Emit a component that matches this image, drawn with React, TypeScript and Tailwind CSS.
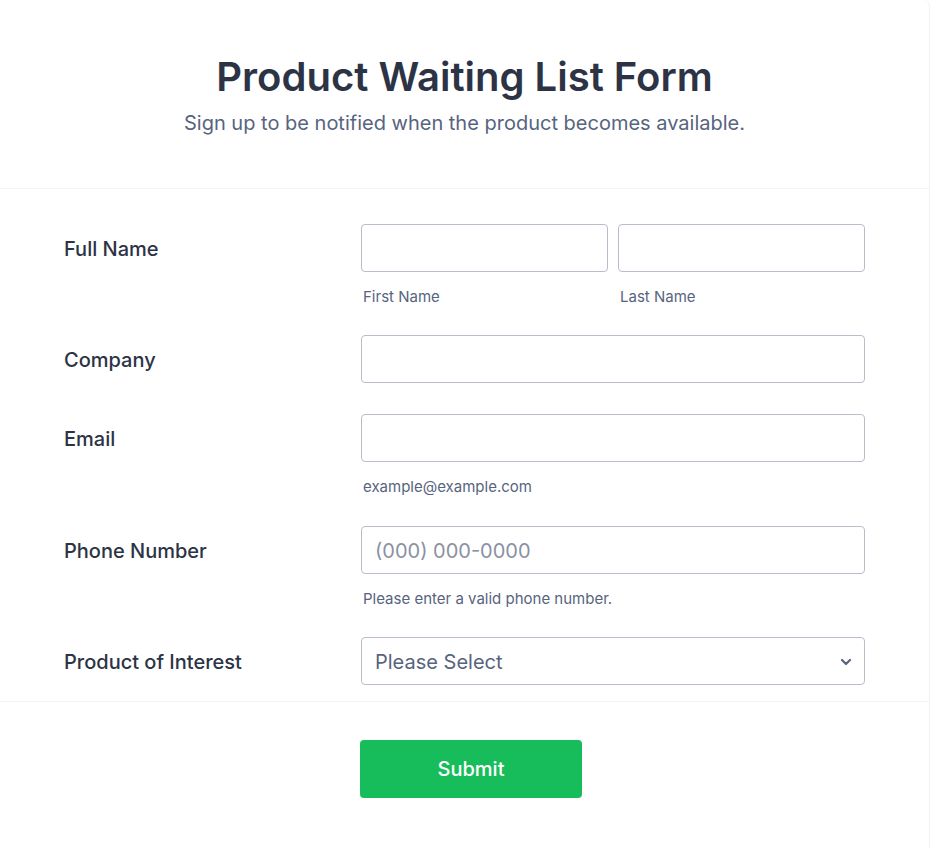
import React from "react";

function Row({
  label,
  children,
}: {
  label: string;
  children: React.ReactNode;
}) {
  return (
    <div className="flex pt-[15px] pb-4">
      <div className="w-[297px] h-12 flex items-center pt-[1px] text-[20px] font-medium text-[#2c3345] shrink-0">
        {label}
      </div>
      <div className="w-[504px]">{children}</div>
    </div>
  );
}

function Input({ placeholder }: { placeholder?: string }) {
  return (
    <div className="h-12 w-full rounded-[4px] border border-[#b8bdc9] bg-white flex items-center px-[13px] pt-[1px] text-[20px] text-[#8a91a3]">
      {placeholder}
    </div>
  );
}

function Sub({ children }: { children: React.ReactNode }) {
  return (
    <div className="mt-[18px] leading-[14px] text-[15px] text-[#57647e] pl-[2px]">{children}</div>
  );
}

export default function App() {
  return (
    <div
      className="w-[930px] h-[848px] bg-white"
      style={{ fontFamily: "Inter, 'Noto Sans', sans-serif" }}
    >
      <div className="w-[930px] h-[848px] bg-white rounded-tr-[6px] border-r border-[#f0f0f7]">
        <div className="pt-[53px] pb-[51px] text-center border-b border-[#f3f3fe]">
          <h1 className="text-[40px] leading-[48px] font-semibold text-[#2c3345]">
            Product Waiting List Form
          </h1>
          <p className="mt-2 text-[20px] leading-7 text-[#57647e]">
            Sign up to be notified when the product becomes available.
          </p>
        </div>
        <div className="px-16 pt-5 border-b border-[#f3f3fe]">
          <Row label="Full Name">
            <div className="flex gap-[10px]">
              <div className="flex-1">
                <Input />
                <Sub>First Name</Sub>
              </div>
              <div className="flex-1">
                <Input />
                <Sub>Last Name</Sub>
              </div>
            </div>
          </Row>
          <Row label="Company">
            <Input />
          </Row>
          <Row label="Email">
            <Input />
            <div className="mb-[1px]">
              <Sub>example@example.com</Sub>
            </div>
          </Row>
          <Row label="Phone Number">
            <Input placeholder="(000) 000-0000" />
            <Sub>Please enter a valid phone number.</Sub>
          </Row>
          <Row label="Product of Interest">
            <div className="h-12 w-full rounded-[4px] border border-[#b8bdc9] bg-white flex items-center justify-between pl-[13px] pr-[11px] pt-[1px] text-[20px] text-[#57647e]">
              <span>Please Select</span>
              <svg width="14" height="14" viewBox="0 0 14 14" fill="none">
                <path
                  d="M3 5l4 4 4-4"
                  stroke="#57647e"
                  strokeWidth="2.2"
                  strokeLinecap="round"
                  strokeLinejoin="round"
                />
              </svg>
            </div>
          </Row>
        </div>
        <div className="pt-[38px] pl-[360px]">
          <button className="w-[222px] h-[58px] rounded-[4px] bg-[#18bd5b] text-white text-[20px] font-medium">
            Submit
          </button>
        </div>
      </div>
    </div>
  );
}
